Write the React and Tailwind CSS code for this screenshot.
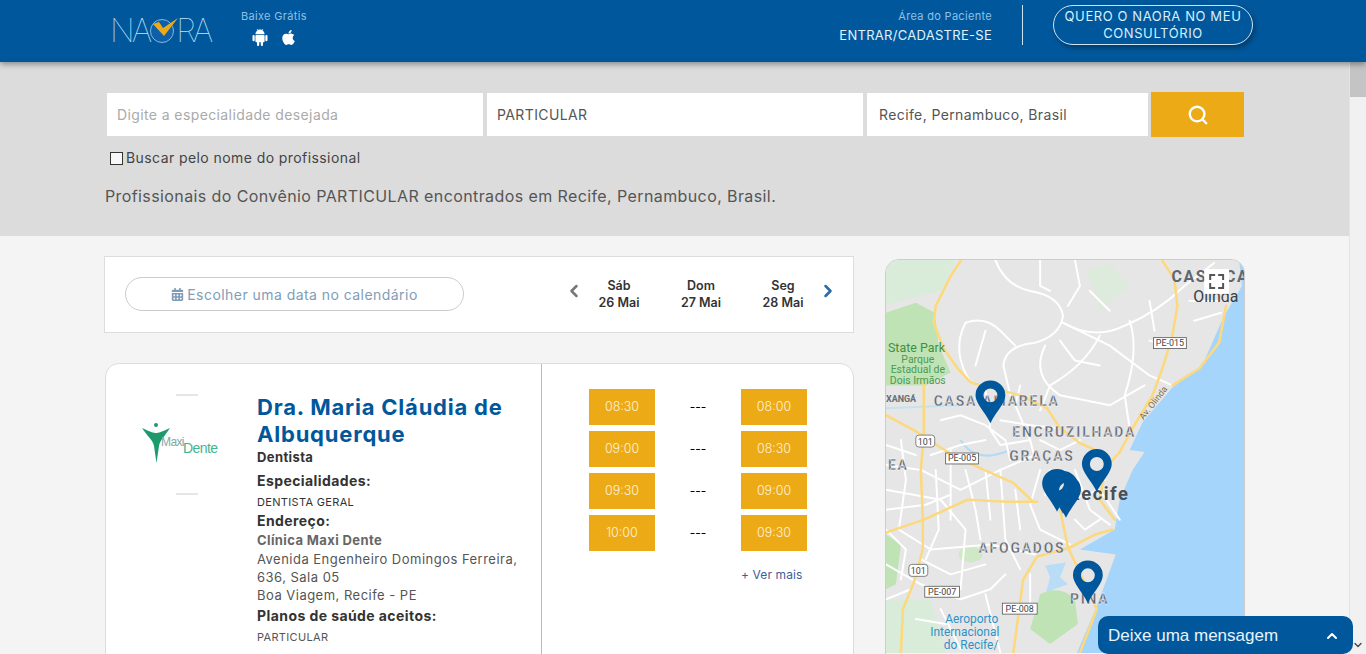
import { ChevronLeft, ChevronRight, ChevronUp, ChevronDown, Search } from 'lucide-react';
import { FaApple, FaCalendarAlt } from 'react-icons/fa';

const dates = [
  { day: 'Sáb', date: '26 Mai' },
  { day: 'Dom', date: '27 Mai' },
  { day: 'Seg', date: '28 Mai' },
];

const slots = [
  ['08:30', '---', '08:00'],
  ['09:00', '---', '08:30'],
  ['09:30', '---', '09:00'],
  ['10:00', '---', '09:30'],
];

const whiteRoads = [
  'M995 259 Q1005 285 1030 290 Q1060 295 1063 315 Q1060 335 1035 342 Q1005 345 1003 365 L1010 395',
  'M1040 259 L1040 285 L1050 290',
  'M1063 322 Q1095 340 1125 325 Q1160 310 1185 285 L1215 262',
  'M1063 322 L1110 345 L1150 375 L1173 385',
  'M1130 320 Q1140 350 1125 395 L1130 428',
  'M1100 335 Q1085 365 1050 385 L1040 410',
  'M1045 345 Q1030 375 1060 395 L1110 405 L1145 385',
  'M965 322 Q985 315 1000 330 L1015 345',
  'M965 322 Q950 350 970 382',
  'M985 330 L975 365',
  'M1020 385 L1015 405 L1030 440 L1035 460',
  'M1190 300 L1220 300 M1195 320 L1222 312 M1150 340 L1170 345',
  'M1000 420 L1030 425 L1060 428 M985 390 L990 430 L1000 445 L1030 440',
  'M885 465 L920 470 L960 490 L1000 470 L1035 455',
  'M885 490 L940 500 L965 530 L960 590',
  'M885 565 L920 585 L960 600',
  'M900 440 L905 480 L898 530 L930 550 L990 545 L1035 555',
  'M950 450 L950 520 M1000 470 L1005 540 L1020 570',
  'M1040 470 L1030 505 L1040 530 L1070 545',
  'M1070 500 L1100 490 L1120 520',
  'M885 600 L910 590 M940 610 L960 650 M985 595 L1000 654',
  'M1075 470 L1090 510 L1110 525',
  'M885 510 L925 505 L950 495 M935 470 L938 530 L925 560',
  'M965 470 L975 510 L980 540 M985 470 L990 520 M1015 490 L1020 530',
  'M885 445 L915 455 M930 455 L960 445 L985 440',
  'M940 420 L960 415 L985 425 L1005 440 L1010 460',
  'M1040 440 L1060 450 L1080 440 M1050 470 L1045 495',
  'M885 530 L905 550 L900 580 M920 560 L950 575 L985 565',
  'M960 600 L990 590 L1005 575 M915 620 L945 625 M1030 575 L1030 610',
  'M1100 520 L1085 530 L1075 520 M1085 470 L1105 480',
  'M1060 340 L1075 360 L1100 365 M1150 300 L1155 330',
  'M1090 290 L1110 310 M1075 259 L1080 285 L1068 305',
];

const yellowRoads = [
  'M960 260 L950 275 L935 305 L933 322 L943 348 L957 368 L970 382 L1020 395 L1047 408 L1060 428 L1080 443 L1100 452',
  'M1163 260 L1175 278 L1178 305 L1173 335 L1163 368 L1153 395 L1133 428 L1120 452 L1107 467 L1095 480',
  'M1227 305 L1220 342 L1200 368 L1173 385',
  'M885 415 L913 430 L947 452 L977 467 L1013 483 L1033 502',
  'M923 382 L923 435 L920 470 L922 517 L922 550 L913 583 L902 610 L900 654',
  'M885 533 L923 520 L967 500 L1007 502 L1037 502',
  'M1113 530 L1095 535 L1070 548 L1037 557 L1023 580 L1013 654',
  'M1060 510 L1068 548 L1075 563 L1097 610 L1080 654',
  'M1105 470 L1100 500 L1115 520',
];

function RoadSign({ x, y, w, label }) {
  return (
    <g>
      <rect x={x} y={y} width={w} height={11} fill="#fff" stroke="#555" strokeWidth="0.8" />
      <text x={x + w / 2} y={y + 8.5} textAnchor="middle" fontSize="9" fill="#444" fontFamily="Roboto, sans-serif">{label}</text>
    </g>
  );
}

function Pin({ x, y }) {
  // x, y = tip of the pin
  return (
    <path
      fillRule="evenodd"
      fill="#01579b"
      d={`M${x} ${y} C${x - 6} ${y - 12} ${x - 15} ${y - 20} ${x - 15} ${y - 28} A15 15 0 0 1 ${x + 15} ${y - 28} C${x + 15} ${y - 20} ${x + 6} ${y - 12} ${x} ${y} Z M${x} ${y - 35} A7 7 0 1 0 ${x} ${y - 21} A7 7 0 1 0 ${x} ${y - 35} Z`}
    />
  );
}

function MapLabel({ x, y, children, size = 14 }) {
  return (
    <text x={x} y={y} fontSize={size} fontWeight="700" letterSpacing="1.8" fill="#5f6670" stroke="#fff" strokeWidth="0.3" fontFamily="Roboto, sans-serif">
      {children}
    </text>
  );
}

function CityMap() {
  return (
    <svg viewBox="885 259 360 395" className="block w-[358px] h-[393px]">
      <rect x="885" y="259" width="360" height="395" fill="#e6e6e6" />
      <path d="M885 259 L955 259 L940 290 L900 300 L885 305 Z" fill="#d9ecd9" />
      <path d="M885 312 L915 302 L934 312 L938 345 L950 372 L925 385 L885 385 Z" fill="#bfe3b4" />
      <path d="M1085 270 L1110 262 L1130 285 L1100 310 L1095 290 Z" fill="#dcebdc" />
      <path d="M1040 595 Q1060 585 1075 600 L1078 625 L1050 645 L1030 630 Z" fill="#bfe3b4" />
      <path d="M885 535 L900 545 L895 585 L885 590 Z" fill="#bfe3b4" />
      <path d="M885 600 L930 600 L945 654 L885 654 Z" fill="#d9ecd9" />
      <ellipse cx="970" cy="555" rx="12" ry="8" fill="#cfe8c6" />
      <path d="M1245 259 L1245 654 L1077 654 L1097 607 L1116 555 L1080 550 L1115 530 L1120 500 L1133 470 L1145 452 L1130 450 L1143 422 L1173 387 L1203 365 L1225 315 L1243 285 L1240 259 Z" fill="#a6d5fb" />
      <path d="M1045 566 L1066 563 L1060 578 L1068 585 L1046 593 L1050 578 Z" fill="#b9ddf6" />
      <path d="M960 440 Q975 465 1010 450" fill="none" stroke="#b4daf5" strokeWidth="2" />
      <path d="M885 408 L960 405" fill="none" stroke="#c6e0f0" strokeWidth="2" />
      <g fill="none" stroke="#ffffff" strokeWidth="2" strokeLinejoin="round" strokeLinecap="round">
        {whiteRoads.map((d, i) => <path key={i} d={d} />)}
      </g>
      <g fill="none" stroke="#fcd97e" strokeWidth="2.6" strokeLinejoin="round" strokeLinecap="round">
        {yellowRoads.map((d, i) => <path key={i} d={d} />)}
      </g>

      <text x="1172" y="281" fontSize="16" fontWeight="700" letterSpacing="1.6" fill="#5f6670" fontFamily="Roboto, sans-serif">CASA CAI</text>
      <text x="1194" y="301" fontSize="16" fill="#3c4043" fontFamily="Roboto, sans-serif">Olinda</text>
      <g fontFamily="Roboto, sans-serif" fill="#4c9a55" fontSize="10.5" textAnchor="middle">
        <text x="887" y="351" fontSize="12.5" fill="#3f9142" textAnchor="start">State Park</text>
        <text x="917" y="362">Parque</text>
        <text x="917" y="373">Estadual de</text>
        <text x="917" y="384">Dois Irmãos</text>
      </g>
      <text x="885" y="402" fontSize="9" fontWeight="700" fill="#666d75" fontFamily="Roboto, sans-serif">XANGÁ</text>
      <MapLabel x={933} y={406}>CASA AMARELA</MapLabel>
      <MapLabel x={1012} y={437}>ENCRUZILHADA</MapLabel>
      <MapLabel x={1009} y={461}>GRAÇAS</MapLabel>
      <MapLabel x={887} y={470}>EA</MapLabel>
      <text x="1068" y="500" fontSize="18.5" fontWeight="700" letterSpacing="1.5" fill="#4a4f55" fontFamily="Roboto, sans-serif">Recife</text>
      <MapLabel x={978} y={554}>AFOGADOS</MapLabel>
      <MapLabel x={1070} y={605}>PINA</MapLabel>
      <text x="1144" y="420" fontSize="9" fill="#8a6d2f" transform="rotate(-52 1144 420)" fontFamily="Roboto, sans-serif">Av. Olinda</text>

      <RoadSign x={1154} y={337} w={33} label="PE-015" />
      <RoadSign x={945} y={453} w={33} label="PE-005" />
      <RoadSign x={924} y={587} w={35} label="PE-007" />
      <RoadSign x={1002} y={604} w={35} label="PE-008" />
      <g fontFamily="Roboto, sans-serif" fontSize="9" fill="#444" textAnchor="middle">
        <rect x="915" y="435" width="19" height="12" rx="3" fill="#fff" stroke="#666" strokeWidth="0.8" />
        <text x="924.5" y="444.5">101</text>
        <rect x="908" y="565" width="19" height="12" rx="3" fill="#fff" stroke="#666" strokeWidth="0.8" />
        <text x="917.5" y="574.5">101</text>
      </g>
      <g fontFamily="Roboto, sans-serif" fontSize="12" fill="#2f93c6" textAnchor="end">
        <text x="998" y="624">Aeroporto</text>
        <text x="999" y="637">Internacional</text>
        <text x="998" y="650">do Recife/</text>
      </g>

      <Pin x={990} y={423} />
      <Pin x={1097} y={492} />
      <Pin x={1057} y={512} />
      <Pin x={1063} y={514} />
      <Pin x={1066} y={518} />
      <Pin x={1088} y={604} />

      <rect x="1205" y="268" width="25" height="25" fill="#fff" />
      <path d="M1211 279 V274 H1216 M1219 274 H1224 V279 M1224 282 V287 H1219 M1216 287 H1211 V282" fill="none" stroke="#555" strokeWidth="2" />
    </svg>
  );
}

function MaxiDenteLogo() {
  return (
    <svg viewBox="0 0 90 104" className="block w-[90px] h-[104px]">
      <path d="M36 1 H58" stroke="#ccc" strokeWidth="1" />
      <path d="M36 100 H58" stroke="#ccc" strokeWidth="1" />
      <circle cx="16" cy="31" r="2" fill="#1d9a6c" />
      <path d="M2 34 C10 38 14 39 16 39 C18 39 22 38 30 34 C25 42 20 46 19 52 L16.5 69 L14 52 C13 46 7 42 2 34 Z" fill="#1d9a6c" />
      <text x="21" y="52" fontSize="12" fontWeight="300" fill="#7fa8a0" letterSpacing="-0.6" fontFamily="'Liberation Sans', sans-serif">Maxi</text>
      <text x="43" y="59" fontSize="14" fontWeight="300" fill="#43b592" letterSpacing="-0.6" fontFamily="'Liberation Sans', sans-serif">Dente</text>
    </svg>
  );
}

function AndroidIcon() {
  return (
    <svg viewBox="0 0 16 18" className="w-[16px] h-[18px]" fill="#fff">
      <path d="M3.4 6.2 A4.6 4.6 0 0 1 12.6 6.2 Z" />
      <path d="M5 1 L6.2 2.8 M11 1 L9.8 2.8" stroke="#fff" strokeWidth="0.7" />
      <rect x="3.4" y="6.9" width="9.2" height="7.4" rx="1" />
      <rect x="0.5" y="6.9" width="2.2" height="6.4" rx="1.1" />
      <rect x="13.3" y="6.9" width="2.2" height="6.4" rx="1.1" />
      <rect x="5" y="13" width="2.2" height="5" rx="1.1" />
      <rect x="8.8" y="13" width="2.2" height="5" rx="1.1" />
    </svg>
  );
}

export default function App() {
  return (
    <div className="h-[654px] w-[1366px] overflow-hidden relative bg-[#f4f4f4] text-[#444] font-['Inter',sans-serif]">
      {/* Header */}
      <header className="relative z-10 h-[62px] bg-[#01579b] shadow-[0_2px_6px_rgba(0,0,0,0.4)] flex items-start pl-[113px] pr-[113px]">
        <div className="w-[128px] h-[62px] flex items-center">
          <div className="flex items-center text-[32px] leading-none font-thin text-[#bfe6fb] -ml-[3px] tracking-[-3px]">
            <span>NA</span>
            <svg viewBox="0 0 28 28" className="w-[28px] h-[28px] ml-[1px] -mr-[2px] overflow-visible">
              <circle cx="12" cy="14" r="11.5" fill="#0d5fa8" stroke="#9cd0f0" strokeWidth="0.8" />
              <path d="M3 7 L9 5 L13 11 L28 1 L14 19 Z" fill="#edaa17" />
            </svg>
            <span>RA</span>
          </div>
        </div>
        <div className="pt-[9px] w-[80px] text-[11px] leading-[14px] tracking-[0.03em] text-[#8dc0e8]">
          <div>Baixe Grátis</div>
          <div className="flex items-center gap-[12px] mt-[5px] ml-[11px] text-white text-[17px]">
            <AndroidIcon />
            <FaApple />
          </div>
        </div>
        <div className="ml-auto flex items-start">
          <div className="text-right pt-[9px]">
            <div className="text-[11px] leading-[14px] tracking-[0.028em] text-[#8dc0e8]">Área do Paciente</div>
            <div className="text-[13px] leading-[16px] tracking-[0.022em] mt-[4px] text-[#e3f2fb]">ENTRAR/CADASTRE-SE</div>
          </div>
          <div className="w-px h-[40px] bg-[#cfe4f3] mt-[5px] ml-[30px] mr-[30px]" />
          <button className="mt-[5px] w-[200px] h-[40px] rounded-[20px] border border-[#cfe4f3] text-[13px] leading-[17px] tracking-[0.046em] text-[#d8f0ff] text-center shadow-[2px_3px_5px_rgba(0,0,0,0.3)]">
            QUERO O NAORA NO MEU<br />CONSULTÓRIO
          </button>
        </div>
      </header>

      <div className="flex h-[592px]">
        <main className="w-[1349px]">
          {/* Search */}
          <section className="h-[174px] bg-[#dcdcdc] pt-[30px] pl-[105px]">
            <div className="flex items-center pl-[2px] text-[14px] tracking-[0.028em]">
              <div className="w-[376px] h-[43px] bg-white flex items-center pl-[10px] text-[#aaa]">Digite a especialidade desejada</div>
              <div className="w-[376px] h-[43px] ml-[4px] bg-white flex items-center pl-[10px] text-[#555]">PARTICULAR</div>
              <div className="w-[281px] h-[43px] ml-[4px] bg-white flex items-center pl-[12px] text-[#555]">Recife, Pernambuco, Brasil</div>
              <button className="w-[93px] h-[45px] ml-[3px] bg-[#edaa17] flex items-center justify-center">
                <Search className="w-[22px] h-[22px] text-white" strokeWidth={2.6} />
              </button>
            </div>
            <label className="flex items-center mt-[11px] ml-[5px] text-[14px] leading-[20px] tracking-[0.03em] text-[#444]">
              <span className="w-[13px] h-[13px] border border-[#333] bg-[#f8f8f8] mr-[3px]" />
              Buscar pelo nome do profissional
            </label>
            <p className="mt-[17px] text-[16px] leading-[22px] tracking-[0.025em] text-[#555]">
              Profissionais do Convênio PARTICULAR encontrados em Recife, Pernambuco, Brasil.
            </p>
          </section>

          <section className="flex pt-[20px] pl-[104px]">
            <div className="w-[750px]">
              {/* Date bar */}
              <div className="h-[77px] bg-white border border-[#ddd] flex items-start pt-[20px] pl-[20px]">
                <button className="w-[339px] h-[34px] rounded-full border border-[#ccc] flex items-center justify-center gap-[3px] text-[14px] tracking-[0.032em] text-[#7f9db8]">
                  <FaCalendarAlt className="w-[13px] h-[13px]" />
                  Escolher uma data no calendário
                </button>
                <ChevronLeft className="w-[20px] h-[20px] mt-[4px] ml-[100px] text-[#777]" strokeWidth={3} />
                <div className="flex -ml-[6px]">
                  {dates.map((d) => (
                    <div key={d.date} className="w-[82px] text-center text-[12.5px] leading-[17px] font-semibold text-[#333]">
                      <div>{d.day}</div>
                      <div>{d.date}</div>
                    </div>
                  ))}
                </div>
                <ChevronRight className="w-[20px] h-[20px] mt-[4px] -ml-[6px] text-[#2a6aa5]" strokeWidth={3} />
              </div>

              {/* Professional card */}
              <div className="mt-[30px] ml-px h-[400px] bg-white border border-[#ddd] rounded-[14px] flex">
                <div className="w-[436px] flex border-r border-[#bbb] pr-[14px]">
                  <div className="w-[151px] pt-[30px] pl-[34px] shrink-0">
                    <MaxiDenteLogo />
                  </div>
                  <div className="pt-[30px]">
                    <h2 className="text-[22px] leading-[27px] font-bold tracking-[0.036em] text-[#01579b]">Dra. Maria Cláudia de Albuquerque</h2>
                    <div className="text-[13px] leading-[18px] font-bold tracking-[0.03em] text-[#333]">Dentista</div>
                    <div className="text-[14px] leading-[19px] font-bold tracking-[0.03em] text-[#333] mt-[5px]">Especialidades:</div>
                    <div className="text-[11px] leading-[16px] tracking-[0.03em] text-[#333] mt-[4px]">DENTISTA GERAL</div>
                    <div className="text-[14px] leading-[19px] font-bold tracking-[0.03em] text-[#333] mt-[1px]">Endereço:</div>
                    <div className="text-[13px] leading-[18px] font-bold tracking-[0.03em] text-[#666] mt-[1px]">Clínica Maxi Dente</div>
                    <div className="text-[13px] leading-[18px] tracking-[0.037em] text-[#555] mt-[1px]">
                      Avenida Engenheiro Domingos Ferreira, 636, Sala 05
                      <br />
                      Boa Viagem, Recife - PE
                    </div>
                    <div className="text-[14px] leading-[19px] font-bold tracking-[0.03em] text-[#333] mt-[2px]">Planos de saúde aceitos:</div>
                    <div className="text-[11px] leading-[16px] tracking-[0.03em] text-[#555] mt-[4px]">PARTICULAR</div>
                  </div>
                </div>
                <div className="pt-[25px] pl-[47px]">
                  <div className="flex flex-col gap-[6px]">
                    {slots.map((row, i) => (
                      <div key={i} className="flex items-center">
                        <div className="w-[66px] h-[36px] bg-[#edaa17] flex items-center justify-center text-[12.5px] font-light text-[#fdf3dc]">{row[0]}</div>
                        <div className="w-[86px] text-center text-[12px] text-black">{row[1]}</div>
                        <div className="w-[66px] h-[36px] bg-[#edaa17] flex items-center justify-center text-[12.5px] font-light text-[#fdf3dc]">{row[2]}</div>
                      </div>
                    ))}
                  </div>
                  <div className="mt-[15px] pl-[152px] text-[12px] leading-[18px] tracking-[0.01em] text-[#3d5f9c]">+ Ver mais</div>
                </div>
              </div>
            </div>

            {/* Map */}
            <div className="ml-[31px] mt-[3px] w-[360px] h-[420px] rounded-t-[14px] border border-[#ccc] overflow-hidden">
              <CityMap />
            </div>
          </section>
        </main>

        {/* Page scrollbar */}
        <div className="w-[17px] bg-[#f1f1f1] border-l border-[#e4e4e4] flex flex-col justify-between items-center">
          <div className="w-full h-[35px] bg-[#c4c4c4]" />
          <ChevronDown className="w-[12px] h-[12px] text-[#505050] mb-[3px]" strokeWidth={3} />
        </div>
      </div>

      {/* Chat widget */}
      <div className="absolute left-[1098px] top-[616px] w-[255px] h-[38px] bg-[#01579b] rounded-[10px] flex items-center justify-between pl-[10px] pr-[13px] pt-[1px] font-['Liberation_Sans',sans-serif] text-[17px] text-[#e6f4fc]">
        <span>Deixe uma mensagem</span>
        <ChevronUp className="w-[16px] h-[16px] text-white" strokeWidth={3} />
      </div>
    </div>
  );
}
